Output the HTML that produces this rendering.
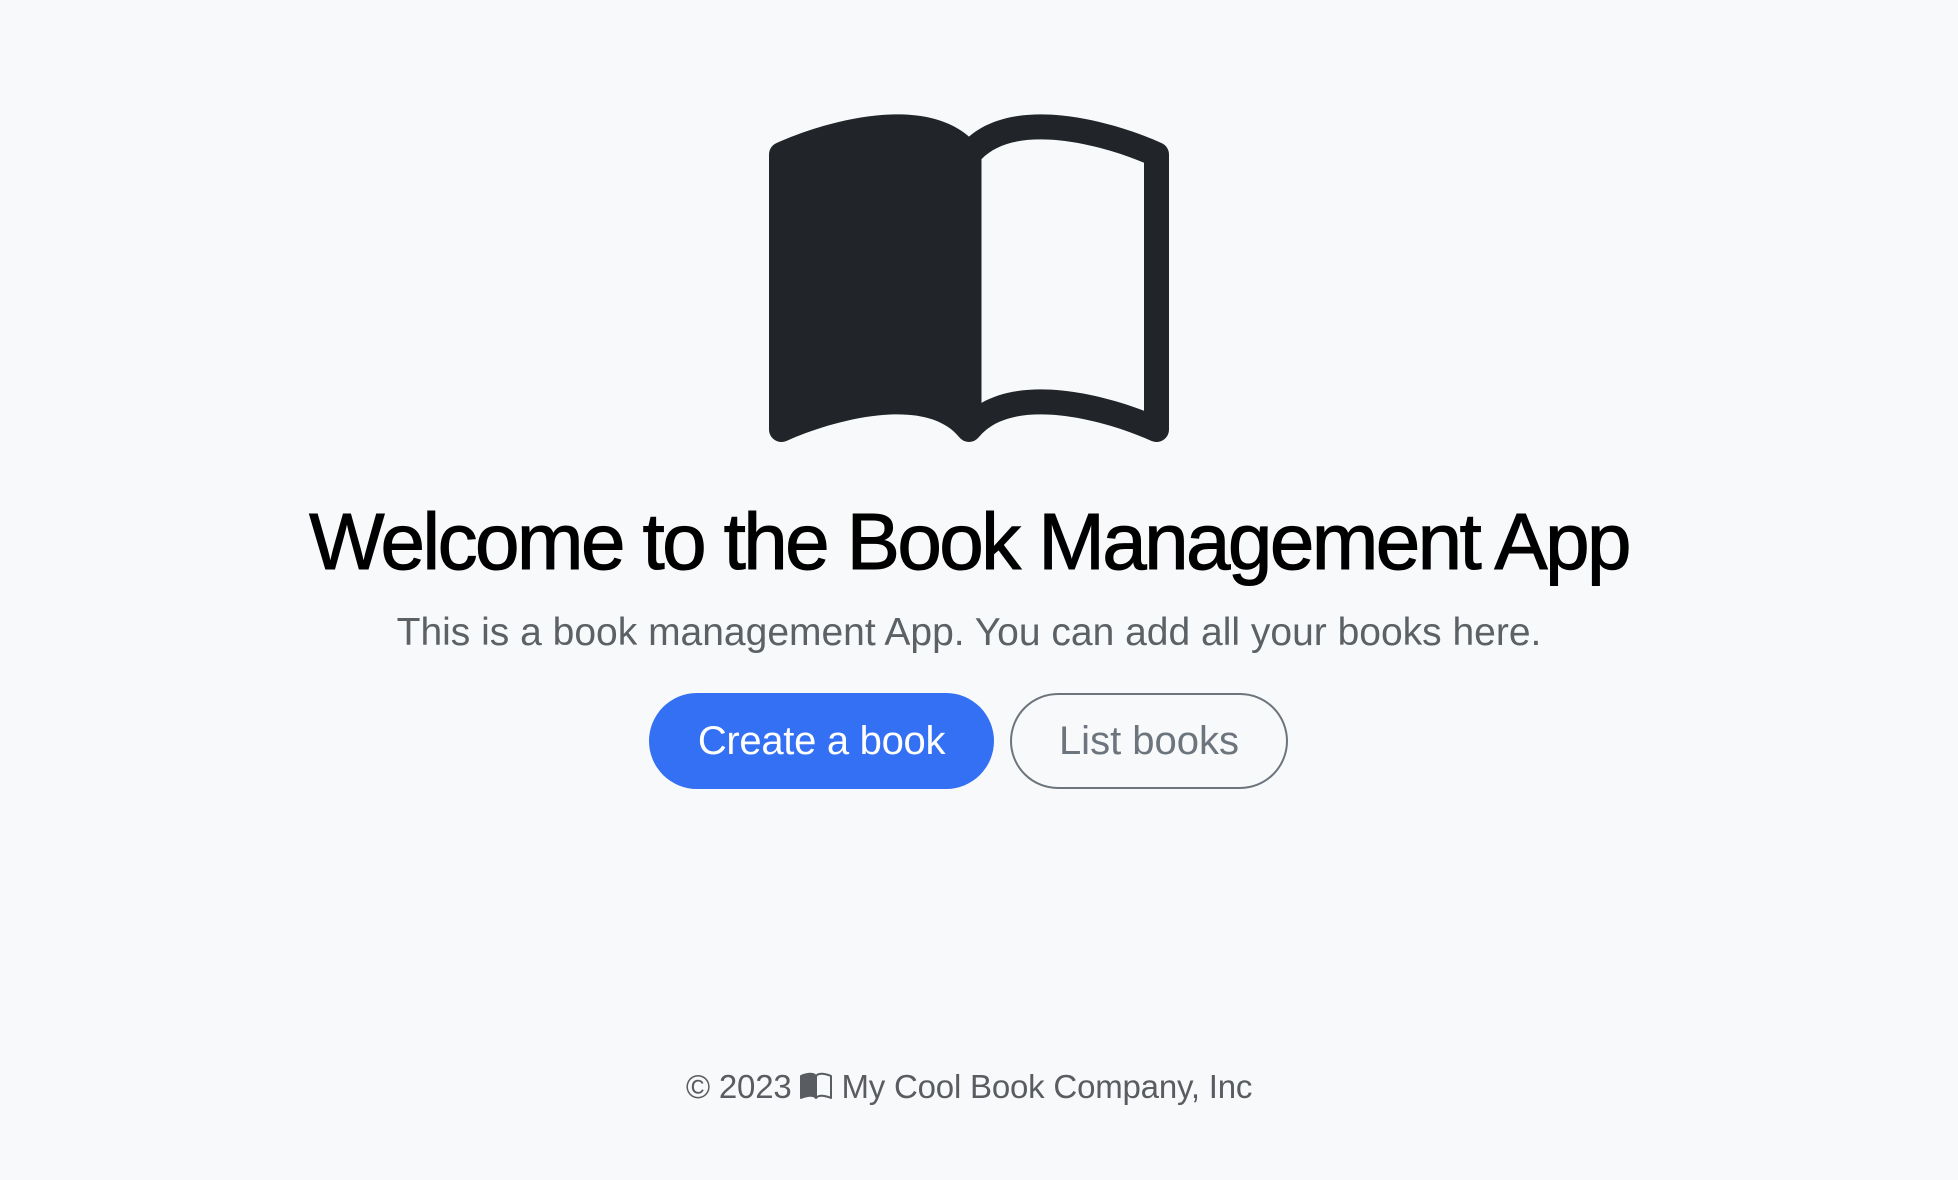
<!DOCTYPE html>
<html><head><meta charset="utf-8"><style>
html,body{margin:0;padding:0;background:#f8f9fa;width:1958px;height:1180px;overflow:hidden;font-family:"Liberation Sans",sans-serif;}
.t{position:absolute;left:0;width:1958px;text-align:center;white-space:nowrap;}
h1{margin:0;font-weight:normal;}
.btn{position:absolute;top:693px;height:96px;box-sizing:border-box;border-radius:48px;display:flex;align-items:center;justify-content:center;font-size:40px;}
</style></head><body>
<svg style="position:absolute;left:769px;top:92px" width="400" height="400" viewBox="0 0 16 16" fill="#212529"><path d="M8.5 2.687c.654-.689 1.782-.886 3.112-.752 1.234.124 2.503.523 3.388.893v9.923c-.918-.35-2.107-.692-3.287-.81-1.094-.111-2.278-.039-3.213.492V2.687zM8 1.783C7.015.936 5.587.81 4.287.94c-1.514.153-3.042.672-3.994 1.105A.5.5 0 0 0 0 2.5v11a.5.5 0 0 0 .707.455c.882-.4 2.303-.881 3.68-1.02 1.409-.142 2.59.087 3.223.877a.5.5 0 0 0 .78 0c.633-.79 1.814-1.019 3.222-.877 1.378.139 2.8.62 3.681 1.02A.5.5 0 0 0 16 13.5v-11a.5.5 0 0 0-.293-.455c-.952-.433-2.48-.952-3.994-1.105C10.413.809 8.985.936 8 1.783z"/></svg>
<h1 class="t" style="top:494px;font-size:80px;line-height:96px;color:#000;left:-10px;letter-spacing:-2.6px;-webkit-text-stroke:1px #000;">Welcome to the Book Management App</h1>
<div class="t" style="top:609px;font-size:39px;line-height:48px;color:#5c6166;left:-10px;">This is a book management App. You can add all your books here.</div>
<div class="btn" style="left:649px;width:345px;background:#3470f3;color:#fff;letter-spacing:-0.3px;">Create a book</div>
<div class="btn" style="left:1010px;width:278px;border:2px solid #6c757d;color:#6c757d;">List books</div>
<div class="t" style="top:1067px;font-size:33px;line-height:40px;color:#595c60;left:-10px;letter-spacing:-0.2px;">© 2023 <svg width="32" height="32" viewBox="0 0 16 16" fill="#595c60" style="vertical-align:-5px"><path d="M8.5 2.687c.654-.689 1.782-.886 3.112-.752 1.234.124 2.503.523 3.388.893v9.923c-.918-.35-2.107-.692-3.287-.81-1.094-.111-2.278-.039-3.213.492V2.687zM8 1.783C7.015.936 5.587.81 4.287.94c-1.514.153-3.042.672-3.994 1.105A.5.5 0 0 0 0 2.5v11a.5.5 0 0 0 .707.455c.882-.4 2.303-.881 3.68-1.02 1.409-.142 2.59.087 3.223.877a.5.5 0 0 0 .78 0c.633-.79 1.814-1.019 3.222-.877 1.378.139 2.8.62 3.681 1.02A.5.5 0 0 0 16 13.5v-11a.5.5 0 0 0-.293-.455c-.952-.433-2.48-.952-3.994-1.105C10.413.809 8.985.936 8 1.783z"/></svg> My Cool Book Company, Inc</div>
</body></html>
